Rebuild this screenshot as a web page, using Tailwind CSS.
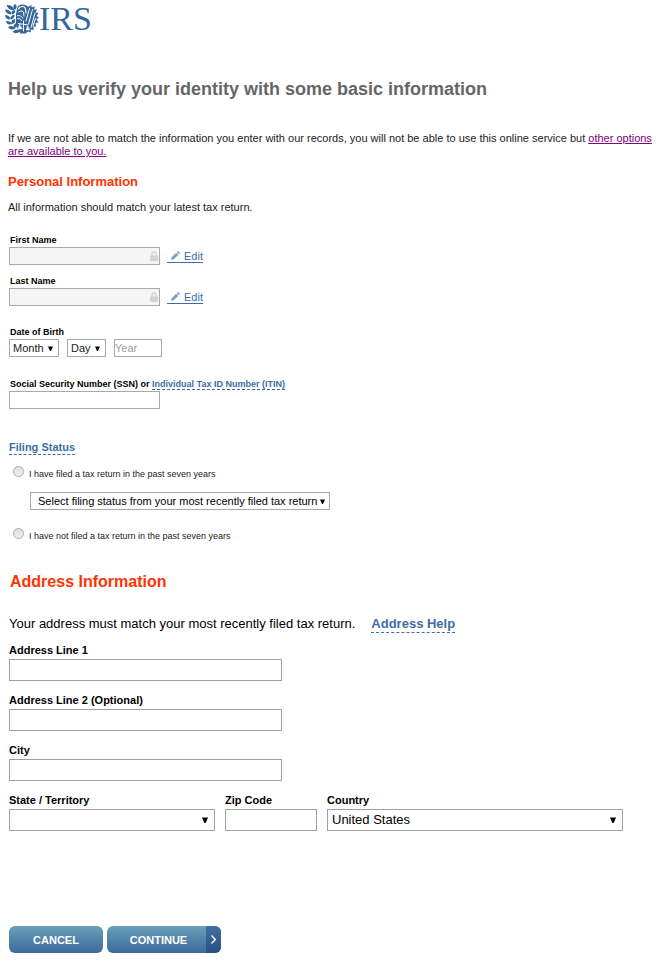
<!DOCTYPE html>
<html lang="en">
<head>
<meta charset="utf-8">
<meta name="viewport" content="width=device-width, initial-scale=1">
<title>IRS - Verify your identity</title>
<script src="https://cdn.jsdelivr.net/npm/@tailwindcss/browser@4"></script>
</head>
<body class="bg-white text-[#222] font-['Liberation_Sans',Arial,sans-serif] text-[11px] leading-3">
<svg class="hidden">
  <symbol id="caret" viewBox="0 0 6 6"><path d="M0 0.5H6L3.6 6H2.4Z" fill="#000"/></symbol>
  <symbol id="lock" viewBox="0 0 8 10"><path d="M2 5V3a2 2 0 0 1 4 0v2" fill="none" stroke="#d3d3d3" stroke-width="1.4"/><rect y="4.5" width="8" height="5.5" rx="0.6" fill="#d3d3d3"/></symbol>
  <symbol id="pencil" viewBox="0 0 9 9"><path d="M0 9 0.7 6.2 5.2 1.7 7.3 3.8 2.8 8.3ZM5.8 1.1 6.6 0.3Q7 0 7.4 0.3L8.7 1.6Q9 2 8.7 2.4L7.9 3.2Z" fill="#7f9cc9"/></symbol>
</svg>
<header class="flex px-[5px] pt-1">
  <a href="#" aria-label="IRS home" class="flex items-start text-[#336799]">
    <svg class="w-[34px] h-[30px] shrink-0" viewBox="0 0 34 30" fill="none" stroke="currentColor">
      <g fill="currentColor" stroke="none">
        <path d="M9.500 5.500Q7 0.500 1.500 1Q3 5.500 8 6.500ZM6.500 9Q4 5 0 5.500Q1 10 6 10.500ZM5.500 14Q3 10.500 0 11Q0.500 15.500 5.500 15.500ZM6.500 18.500Q3 16 0.500 17.500Q2.500 21.500 7.500 20ZM9 23Q5.500 21 3 23.500Q6 27 10.500 24.500ZM13 26Q9.500 25 7.500 28Q11 30.500 15 27.500Z"/>
        <path d="M10.500 5.500Q13 2 10 0Q7.500 2 9 5ZM7 10.500Q11 9.500 10 6Q6.500 6.500 6.500 9ZM6 15.500Q10 14 9.500 10.500Q6 11 5.500 14ZM7.500 20Q11 18.500 10 15Q6.500 15.500 6.500 18ZM10 24Q13 22.500 12 19Q8.500 20 8.500 22.500Z"/>
        <path d="M12 5Q12.500 0.500 17.500 0.500Q21.500 0.500 23 3L26.500 1 26.500 3.500 30 2.500 29 5.500 32 5.500 30.500 8.500 33.500 9 31.500 12 34 13.500 31.500 15.500 33.500 18.500 30.500 19 31 22.500 28.500 22.500 28.500 26 26 25.500 25.500 28.500 23 27.500 20.500 29.500H15.500L13 26 11 20 11 10Z"/>
      </g>
      <g stroke="#fff" stroke-linecap="round">
        <path d="M13.500 5Q14.500 2.500 17.500 2.500Q20 2.500 20.500 5L21 9" stroke-width="1.200"/>
        <path d="M13.500 8Q16 5.500 18.500 8L19 12" stroke-width="1"/>
        <path d="M12.500 11.500Q15 10.500 18 14M12.500 14.500Q15 14 17 16.500" stroke-width="0.900"/>
        <path d="M24.500 4.500 21 17M27.500 5.500 23.500 20M30 9 26 23.500M30.500 14.500 28 22" stroke-width="1"/>
        <path d="M18.500 17V27M13.500 19.500 23 21" stroke-width="1"/>
        <path d="M14.500 20.500 13 25H17ZM22.500 22 21 26H24.500Z" fill="#fff" stroke-width="0.500"/>
      </g>
      <circle cx="17.500" cy="4.500" r="0.700" fill="currentColor" stroke="none"/>
    </svg>
    <span class="font-['Liberation_Serif',serif] text-[34px] leading-[30px]">IRS</span>
  </a>
</header>
<main class="pl-2 pr-2">
  <h1 class="mt-[43px] text-lg leading-6 font-bold text-[#666]">Help us verify your identity with some basic information</h1>
  <p class="mt-[31px] leading-[13px]">If we are not able to match the information you enter with our records, you will not be able to use this online service but <a href="#" class="text-[#800080] underline">other options are available to you.</a></p>
  <form>
    <section>
      <h2 class="mt-[14px] text-[13px] leading-5 font-bold text-[#ff3300]">Personal Information</h2>
      <p class="mt-[9px]">All information should match your latest tax return.</p>
      <div class="pl-px mt-[21px] flex flex-col">
        <label for="first" class="pl-px text-[9px] font-bold mb-px text-black">First Name</label>
        <div class="flex items-center gap-[7px]">
          <div class="grid items-center w-[151px]">
            <input id="first" readonly class="col-start-1 row-start-1 w-full h-[18px] px-1 border border-[#a9a9a9] bg-[#f5f5f5]">
            <svg class="col-start-1 row-start-1 justify-self-end mr-[2px] w-2 h-[10px]"><use href="#lock"/></svg>
          </div>
          <a href="#" class="flex items-baseline border-b border-[#3d6da3] text-[#3d6da3] leading-3"><svg class="w-[9px] h-[9px] mx-1 shrink-0"><use href="#pencil"/></svg>Edit</a>
        </div>
        <label for="last" class="pl-px text-[9px] font-bold mb-px mt-[10px] text-black">Last Name</label>
        <div class="flex items-center gap-[7px]">
          <div class="grid items-center w-[151px]">
            <input id="last" readonly class="col-start-1 row-start-1 w-full h-[18px] px-1 border border-[#a9a9a9] bg-[#f5f5f5]">
            <svg class="col-start-1 row-start-1 justify-self-end mr-[2px] w-2 h-[10px]"><use href="#lock"/></svg>
          </div>
          <a href="#" class="flex items-baseline border-b border-[#3d6da3] text-[#3d6da3] leading-3"><svg class="w-[9px] h-[9px] mx-1 shrink-0"><use href="#pencil"/></svg>Edit</a>
        </div>
      </div>
      <fieldset class="pl-px mt-5">
        <legend class="pl-px text-[9px] font-bold text-black mb-px">Date of Birth</legend>
        <div class="flex gap-2">
          <div class="grid items-center w-[50px]">
            <select aria-label="Month" class="appearance-none col-start-1 row-start-1 w-full h-[18px] pl-[3px] border border-[#a9a9a9] bg-white"><option>Month</option></select>
            <svg class="pointer-events-none col-start-1 row-start-1 justify-self-end mr-[6px] size-[5px]"><use href="#caret"/></svg>
          </div>
          <div class="grid items-center w-[39px]">
            <select aria-label="Day" class="appearance-none col-start-1 row-start-1 w-full h-[18px] pl-[3px] border border-[#a9a9a9] bg-white"><option>Day</option></select>
            <svg class="pointer-events-none col-start-1 row-start-1 justify-self-end mr-[6px] size-[5px]"><use href="#caret"/></svg>
          </div>
          <input aria-label="Year" placeholder="Year" class="w-12 h-[18px] border border-[#a9a9a9] placeholder:text-[#a0a0a0]">
        </div>
      </fieldset>
      <div class="pl-px mt-[21px] flex flex-col">
        <div class="pl-px text-[9px] font-bold mb-px text-black"><label for="ssn">Social Security Number (SSN) or</label> <a href="#" class="text-[#3d6da3] border-b border-dashed border-[#3d6da3]">Individual Tax ID Number (ITIN)</a></div>
        <input id="ssn" class="w-[151px] h-[18px] px-1 border border-[#a9a9a9]">
      </div>
      <fieldset class="pl-px mt-[31px]">
        <legend class="flex"><a href="#" class="font-bold leading-[14px] text-[#3d6da3] border-b border-dashed border-[#3d6da3]">Filing Status</a></legend>
        <div class="mt-[11px] ml-1 flex items-start gap-[5px] text-[9px]">
          <input id="filed" type="radio" name="filing" class="appearance-none size-[11px] shrink-0 rounded-full border border-[#aaa] bg-linear-to-b from-[#ddd] to-[#f0f0f0]">
          <label for="filed" class="mt-[2px]">I have filed a tax return in the past seven years</label>
        </div>
        <div class="mt-3 ml-[21px] grid items-center w-[300px]">
          <select aria-label="Filing status" class="appearance-none col-start-1 row-start-1 w-full h-[18px] pl-[7px] border border-[#a9a9a9] bg-white text-black"><option>Select filing status from your most recently filed tax return</option></select>
          <svg class="pointer-events-none col-start-1 row-start-1 justify-self-end mr-[5px] size-[5px]"><use href="#caret"/></svg>
        </div>
        <div class="mt-[18px] ml-1 flex items-start gap-[5px] text-[9px]">
          <input id="notfiled" type="radio" name="filing" class="appearance-none size-[11px] shrink-0 rounded-full border border-[#aaa] bg-linear-to-b from-[#ddd] to-[#f0f0f0]">
          <label for="notfiled" class="mt-[2px]">I have not filed a tax return in the past seven years</label>
        </div>
      </fieldset>
    </section>
    <section class="pl-px text-black">
      <h2 class="mt-[30px] pl-px text-base leading-5 font-bold text-[#ff3300]">Address Information</h2>
      <p class="mt-6 flex gap-4 text-[13px] leading-4">Your address must match your most recently filed tax return. <a href="#" class="font-bold text-[#3d6da3] border-b border-dashed border-[#3d6da3]">Address Help</a></p>
      <div class="mt-[11px] flex flex-col">
        <label for="a1" class="font-bold mb-[3px]">Address Line 1</label>
        <input id="a1" class="w-[273px] h-[22px] px-1 border border-[#a0a0a0] text-[13px]">
        <label for="a2" class="font-bold mb-[3px] mt-[13px]">Address Line 2 (Optional)</label>
        <input id="a2" class="w-[273px] h-[22px] px-1 border border-[#a0a0a0] text-[13px]">
        <label for="city" class="font-bold mb-[3px] mt-[13px]">City</label>
        <input id="city" class="w-[273px] h-[22px] px-1 border border-[#a0a0a0] text-[13px]">
      </div>
      <div class="mt-[13px] flex gap-[10px]">
        <div class="flex flex-col gap-[3px] w-[206px]">
          <label for="state" class="font-bold">State / Territory</label>
          <div class="grid items-center">
            <select id="state" class="appearance-none col-start-1 row-start-1 w-full h-[22px] pl-1 border border-[#a0a0a0] bg-white text-[13px]"><option></option></select>
            <svg class="pointer-events-none col-start-1 row-start-1 justify-self-end mr-[7px] size-[6px]"><use href="#caret"/></svg>
          </div>
        </div>
        <div class="flex flex-col gap-[3px] w-[92px]">
          <label for="zip" class="font-bold">Zip Code</label>
          <input id="zip" class="w-full h-[22px] px-1 border border-[#a0a0a0] text-[13px]">
        </div>
        <div class="flex flex-col gap-[3px] w-[296px]">
          <label for="country" class="font-bold">Country</label>
          <div class="grid items-center">
            <select id="country" class="appearance-none col-start-1 row-start-1 w-full h-[22px] pl-1 border border-[#a0a0a0] bg-white text-[13px]"><option>United States</option></select>
            <svg class="pointer-events-none col-start-1 row-start-1 justify-self-end mr-[7px] size-[6px]"><use href="#caret"/></svg>
          </div>
        </div>
      </div>
      <div class="mt-[95px] mb-3 flex gap-1 font-bold text-white">
        <button type="button" class="w-[94px] h-[27px] rounded-md bg-linear-to-b from-[#6aa0b8] to-[#3a6a9c]">CANCEL</button>
        <button type="submit" class="flex items-stretch w-[114px] h-[27px] rounded-md overflow-hidden bg-linear-to-b from-[#6aa0b8] to-[#3a6a9c]">
          <span class="flex-1 flex items-center justify-center pl-1">CONTINUE</span>
          <span class="w-[15px] flex items-center justify-center bg-linear-to-b from-[#41719f] to-[#264f86]"><svg class="w-[5px] h-[9px]" viewBox="0 0 5 9" fill="none" stroke="#fff" stroke-width="1.4"><path d="M0.500 0.500 4.300 4.500 0.500 8.500"/></svg></span>
        </button>
      </div>
    </section>
  </form>
</main>
</body>
</html>
